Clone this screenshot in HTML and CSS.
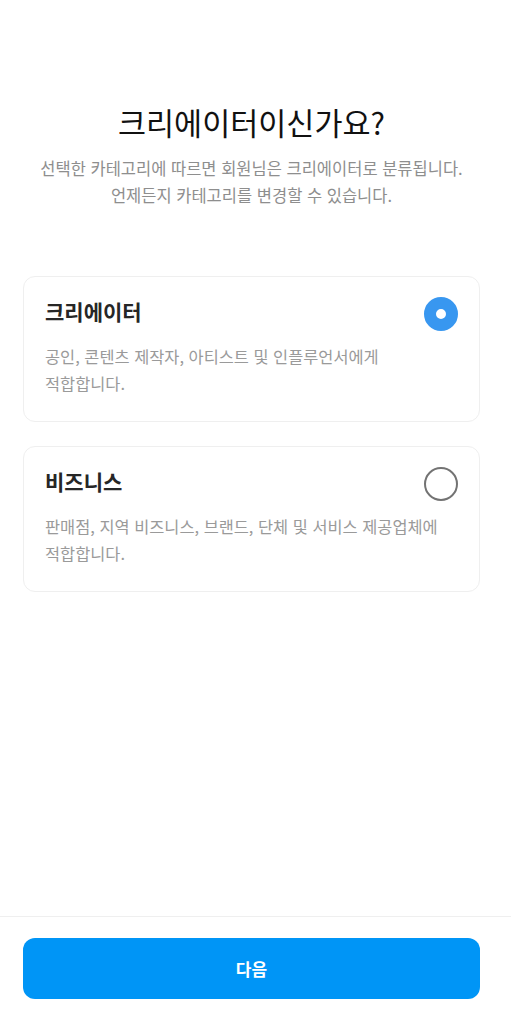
FILE: index.html
```html
<!DOCTYPE html>
<html lang="ko">
<head>
    <meta charset="UTF-8">
    <meta name="viewport" content="width=device-width, initial-scale=1.0">
    <title>계정 유형</title>
    <link rel="stylesheet" href="styles.css">
</head>
<body>
    <div class="page">
        <main class="content">
            <header class="intro">
                <h1 class="intro-title">크리에이터이신가요?</h1>
                <p class="intro-text">선택한 카테고리에 따르면 회원님은 크리에이터로 분류됩니다.<br>언제든지 카테고리를 변경할 수 있습니다.</p>
            </header>

            <div class="options">
                <label class="option">
                    <span class="option-title">크리에이터</span>
                    <input type="radio" name="accountType" class="radio" checked>
                    <span class="option-desc">공인, 콘텐츠 제작자, 아티스트 및 인플루언서에게<br>적합합니다.</span>
                </label>
                <label class="option">
                    <span class="option-title">비즈니스</span>
                    <input type="radio" name="accountType" class="radio">
                    <span class="option-desc">판매점, 지역 비즈니스, 브랜드, 단체 및 서비스 제공업체에<br>적합합니다.</span>
                </label>
            </div>
        </main>

        <footer class="footer">
            <button type="button" class="next-button">다음</button>
        </footer>
    </div>
</body>
</html>
```

FILE: styles.css
```css
* {
    box-sizing: border-box;
}
body {
    margin: 0;
    font-family: "Noto Sans CJK KR", "Noto Sans", sans-serif;
    background: #fff;
    color: #262626;
}
.page {
    height: 1024px;
    display: flex;
    flex-direction: column;
}
.content {
    flex: 1;
    padding: 0 31px 0 23px;
}
.intro {
    padding-top: 101px;
    text-align: center;
}
.intro-title {
    margin: 0;
    font-size: 30.5px;
    line-height: 42px;
    font-weight: 400;
    color: #111;
}
.intro-text {
    margin: 12px 0 0;
    font-size: 16.5px;
    line-height: 27px;
    color: #8e8e8e;
}
.options {
    margin-top: 67px;
    display: flex;
    flex-direction: column;
    gap: 24px;
}
.option {
    display: grid;
    grid-template-columns: 1fr auto;
    align-items: start;
    align-content: start;
    height: 146px;
    padding: 20px 21px 0 21px;
    border: 1px solid #efefef;
    border-radius: 12px;
    cursor: pointer;
}
.option-title {
    font-size: 21px;
    line-height: 29px;
    font-weight: 700;
    color: #262626;
}
.option-desc {
    grid-column: 1 / -1;
    margin-top: 12px;
    font-size: 16.4px;
    line-height: 27px;
    color: #9a9a9a;
    white-space: nowrap;
}
.radio {
    appearance: none;
    margin: 0;
    width: 34px;
    height: 34px;
    border: 2.5px solid #737373;
    border-radius: 50%;
}
.radio:checked {
    border: 12px solid #3897f0;
    background: #fff;
}
.footer {
    border-top: 1px solid #efefef;
    padding: 21px 31px 25px 23px;
}
.next-button {
    display: block;
    width: 100%;
    height: 61px;
    border: none;
    border-radius: 12px;
    background-color: #0095f6;
    color: #fff;
    font-family: inherit;
    font-size: 17px;
    font-weight: 700;
    cursor: pointer;
}
```
